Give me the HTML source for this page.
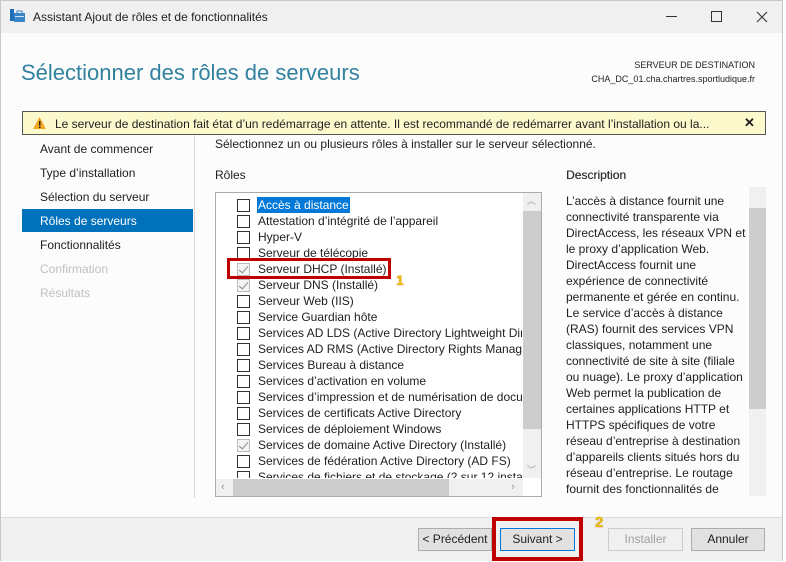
<!DOCTYPE html>
<html><head><meta charset="utf-8"><style>
*{margin:0;padding:0;box-sizing:border-box}
body{width:786px;height:562px;overflow:hidden;background:#fff;font-family:"Liberation Sans",sans-serif;font-size:12px;color:#1e1e1e;position:relative}
.a{position:absolute;white-space:nowrap}
.win{position:absolute;left:0;top:0;width:783px;height:561px;background:#fcfcfc;border:1px solid #c8c8c8}
.tb{position:absolute;left:0;top:0;width:781px;height:32px;background:#f0f0f0}
.nav{left:39px;font-size:12px}
.row{position:absolute;left:236px;height:16px;font-size:12px}
.cb{position:absolute;left:0;top:2px;width:13px;height:13px;border:1px solid #333;background:#fff}
.cb.d{border-color:#bbb;background:#f4f4f4}
.cb.d:after{content:"";position:absolute;left:3px;top:0px;width:4px;height:8px;border-right:1.5px solid #888;border-bottom:1.5px solid #888;transform:rotate(40deg)}
.row span{position:absolute;left:21px;top:0;line-height:16px}
.btn{position:absolute;top:527px;height:23px;border:1px solid #adadad;background:#e1e1e1;text-align:center;line-height:21px;font-size:12px}
</style></head><body>
<div class="win">
<div class="tb"></div>
<svg class="a" style="left:9px;top:8px" width="16" height="14"><rect x="0" y="0" width="4" height="12" fill="#1e6fb5"/><rect x="4" y="4" width="11" height="9" fill="#3a86c8"/><rect x="7" y="2" width="5" height="3" fill="none" stroke="#3a86c8"/><rect x="5" y="7" width="9" height="1" fill="#cfe3f5"/></svg>
<div class="a" style="left:32px;top:9px;font-size:12px">Assistant Ajout de rôles et de fonctionnalités</div>
<div class="a" style="left:665px;top:15px;width:11px;height:1px;background:#333"></div>
<div class="a" style="left:710px;top:10px;width:11px;height:11px;border:1px solid #333"></div>
<svg class="a" style="left:755px;top:10px" width="12" height="12"><path d="M1 1L11 11M11 1L1 11" stroke="#333" stroke-width="1.1"/></svg>
<div class="a" style="left:20px;top:59px;font-size:22px;color:#31819f">Sélectionner des rôles de serveurs</div>
<div class="a" style="right:27px;top:57px;font-size:9px;text-align:right;line-height:14px">SERVEUR DE DESTINATION<br>CHA_DC_01.cha.chartres.sportludique.fr</div>
<div class="a" style="left:21px;top:110px;width:744px;height:24px;background:#fcf9cd;border:1px solid #555"></div>
<svg class="a" style="left:31px;top:115px" width="15" height="14"><path d="M7.5 1 L14 13 L1 13 Z" fill="#f5a623"/><rect x="7" y="5" width="1.5" height="4.5" fill="#222"/><rect x="7" y="10.5" width="1.5" height="1.5" fill="#222"/></svg>
<div class="a" style="left:54px;top:116px;font-size:12px">Le serveur de destination fait état d’un redémarrage en attente. Il est recommandé de redémarrer avant l’installation ou la...</div>
<div class="a" style="left:743px;top:114px;font-size:13px;font-weight:bold">✕</div>
<div class="a nav" style="top:141px">Avant de commencer</div>
<div class="a nav" style="top:165px">Type d’installation</div>
<div class="a nav" style="top:189px">Sélection du serveur</div>
<div class="a" style="left:21px;top:208px;width:171px;height:23px;background:#0072bc"></div>
<div class="a nav" style="top:213px;color:#fff">Rôles de serveurs</div>
<div class="a nav" style="top:237px">Fonctionnalités</div>
<div class="a nav" style="top:261px;color:#c0c0c0">Confirmation</div>
<div class="a nav" style="top:285px;color:#c0c0c0">Résultats</div>
<div class="a" style="left:193px;top:134px;width:1px;height:363px;background:#d8d8d8"></div>
<div class="a" style="left:214px;top:136px">Sélectionnez un ou plusieurs rôles à installer sur le serveur sélectionné.</div>
<div class="a" style="left:214px;top:167px">Rôles</div>
<div class="a" style="left:565px;top:167px;color:#333;text-shadow:0.3px 0 0 #333">Description</div>
<div class="a" style="left:214px;top:191px;width:327px;height:305px;border:1px solid #ababab;background:#fff;overflow:hidden">
</div>
<div class="a" style="left:215px;top:192px;width:306px;height:285px;overflow:hidden">
<div style="position:relative;left:-215px;top:-192px">
<div class="row" style="top:196px"><div class="cb"></div><span style="background:#0078d7;color:#fff;padding:0 1px;left:20px">Accès à distance</span></div>
<div class="row" style="top:212px"><div class="cb"></div><span>Attestation d’intégrité de l’appareil</span></div>
<div class="row" style="top:228px"><div class="cb"></div><span>Hyper-V</span></div>
<div class="row" style="top:244px"><div class="cb"></div><span>Serveur de télécopie</span></div>
<div class="row" style="top:260px"><div class="cb d"></div><span>Serveur DHCP (Installé)</span></div>
<div class="row" style="top:276px"><div class="cb d"></div><span>Serveur DNS (Installé)</span></div>
<div class="row" style="top:292px"><div class="cb"></div><span>Serveur Web (IIS)</span></div>
<div class="row" style="top:308px"><div class="cb"></div><span>Service Guardian hôte</span></div>
<div class="row" style="top:324px"><div class="cb"></div><span>Services AD LDS (Active Directory Lightweight Directory Services)</span></div>
<div class="row" style="top:340px"><div class="cb"></div><span>Services AD RMS (Active Directory Rights Management)</span></div>
<div class="row" style="top:356px"><div class="cb"></div><span>Services Bureau à distance</span></div>
<div class="row" style="top:372px"><div class="cb"></div><span>Services d’activation en volume</span></div>
<div class="row" style="top:388px"><div class="cb"></div><span>Services d’impression et de numérisation de documents</span></div>
<div class="row" style="top:404px"><div class="cb"></div><span>Services de certificats Active Directory</span></div>
<div class="row" style="top:420px"><div class="cb"></div><span>Services de déploiement Windows</span></div>
<div class="row" style="top:436px"><div class="cb d"></div><span>Services de domaine Active Directory (Installé)</span></div>
<div class="row" style="top:452px"><div class="cb"></div><span>Services de fédération Active Directory (AD FS)</span></div>
<div class="row" style="top:468px"><div class="cb"></div><span>Services de fichiers et de stockage (2 sur 12 installés)</span></div>
</div></div>
<div class="a" style="left:522px;top:192px;width:18px;height:285px;background:#f0f0f0"></div>
<div class="a" style="left:522px;top:210px;width:18px;height:218px;background:#cdcdcd"></div>
<div class="a" style="left:526px;top:193px;font-size:9px;color:#999">︿</div>
<div class="a" style="left:526px;top:462px;font-size:9px;color:#999">﹀</div>
<div class="a" style="left:215px;top:478px;width:307px;height:17px;background:#f0f0f0"></div>
<div class="a" style="left:232px;top:478px;width:216px;height:17px;background:#cdcdcd"></div>
<div class="a" style="left:220px;top:480px;color:#999;font-size:11px">‹</div>
<div class="a" style="left:510px;top:480px;color:#999;font-size:11px">›</div>
<div class="a" style="left:565px;top:192px;width:182px;font-size:12px;line-height:16px;white-space:normal;height:303px;overflow:hidden">L’accès à distance fournit une connectivité transparente via DirectAccess, les réseaux VPN et le proxy d’application Web. DirectAccess fournit une expérience de connectivité permanente et gérée en continu. Le service d’accès à distance (RAS) fournit des services VPN classiques, notamment une connectivité de site à site (filiale ou nuage). Le proxy d’application Web permet la publication de certaines applications HTTP et HTTPS spécifiques de votre réseau d’entreprise à destination d’appareils clients situés hors du réseau d’entreprise. Le routage fournit des fonctionnalités de</div>
<div class="a" style="left:748px;top:186px;width:17px;height:309px;background:#f0f0f0"></div>
<div class="a" style="left:748px;top:207px;width:17px;height:201px;background:#cdcdcd"></div>
<div class="a" style="left:0;top:516px;width:781px;height:44px;background:#f0f0f0;border-top:1px solid #dcdcdc"></div>
<div class="btn" style="left:417px;width:74px">&lt; Précédent</div>
<div class="btn" style="left:499px;width:75px;border-color:#0078d7">Suivant &gt;</div>
<div class="btn" style="left:607px;width:75px;background:#f0f0f0;border-color:#ccc;color:#a0a0a0">Installer</div>
<div class="btn" style="left:690px;width:74px">Annuler</div>
</div>
<div class="a" style="left:227px;top:258px;width:164px;height:21px;border:3px solid #c00000"></div>
<div class="a" style="left:396px;top:272px;font-size:14px;font-weight:bold;color:#e8c000;text-shadow:0 0 1px #c04000">1</div>
<div class="a" style="left:492px;top:517px;width:91px;height:44px;border:4px solid #c00000"></div>
<div class="a" style="left:595px;top:514px;font-size:15px;font-weight:bold;color:#e8c000;text-shadow:0 0 1px #c04000">2</div>
</body></html>
